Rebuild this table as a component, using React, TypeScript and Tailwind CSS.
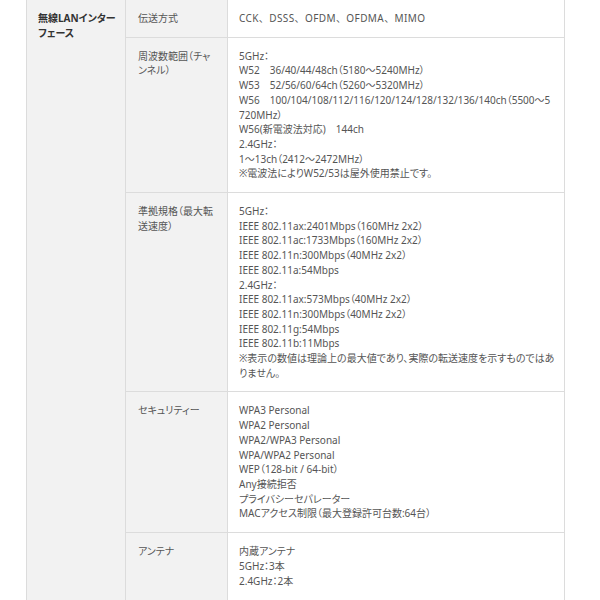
type Row = { label: string[]; lines: string[]; wide?: boolean };

const rows: Row[] = [
	{ label: ["伝送方式"], lines: ["CCK、DSSS、OFDM、OFDMA、MIMO"], wide: true },
	{
		label: ["周波数範囲（チャ", "ンネル）"],
		lines: [
			"5GHz：",
			"W52　36/40/44/48ch（5180～5240MHz）",
			"W53　52/56/60/64ch（5260～5320MHz）",
			"W56　100/104/108/112/116/120/124/128/132/136/140ch（5500～5",
			"720MHz）",
			"W56(新電波法対応)　144ch",
			"2.4GHz：",
			"1～13ch（2412～2472MHz）",
			"※電波法によりW52/53は屋外使用禁止です。",
		],
	},
	{
		label: ["準拠規格（最大転", "送速度）"],
		lines: [
			"5GHz：",
			"IEEE 802.11ax:2401Mbps（160MHz 2x2）",
			"IEEE 802.11ac:1733Mbps（160MHz 2x2）",
			"IEEE 802.11n:300Mbps（40MHz 2x2）",
			"IEEE 802.11a:54Mbps",
			"2.4GHz：",
			"IEEE 802.11ax:573Mbps（40MHz 2x2）",
			"IEEE 802.11n:300Mbps（40MHz 2x2）",
			"IEEE 802.11g:54Mbps",
			"IEEE 802.11b:11Mbps",
			"※表示の数値は理論上の最大値であり、実際の転送速度を示すものではあ",
			"りません。",
		],
	},
	{
		label: ["セキュリティー"],
		lines: [
			"WPA3 Personal",
			"WPA2 Personal",
			"WPA2/WPA3 Personal",
			"WPA/WPA2 Personal",
			"WEP（128-bit / 64-bit）",
			"Any接続拒否",
			"プライバシーセパレーター",
			"MACアクセス制限（最大登録許可台数:64台）",
		],
	},
	{ label: ["アンテナ"], lines: ["内蔵アンテナ", "5GHz：3本", "2.4GHz：2本"] },
];

export default function App() {
	return (
		<div className="min-h-[600px] bg-white font-['Noto_Sans','Noto_Sans_CJK_JP',sans-serif] text-[10px] leading-[14.7px] [font-feature-settings:'palt']">
			<div className="ml-[26px] flex w-[539px] border-x border-[#dcdcdc]">
				<div className="w-[99px] shrink-0 border-r border-[#dcdcdc] bg-[#f2f2f2] py-[11px] pl-[11px] font-bold text-[#333]">
					<p>無線LANインター</p>
					<p>フェース</p>
				</div>
				<div className="min-w-0 flex-1">
					{rows.map((row, i) => (
						<div
							key={i}
							className={`flex ${i < rows.length - 1 ? "border-b border-[#dcdcdc]" : "min-h-[70px]"}`}
						>
							<div className="w-[102px] shrink-0 border-r border-[#dcdcdc] bg-[#f2f2f2] pt-[11px] pb-[11px] pl-[12px] text-[#555]">
								{row.label.map((l) => (
									<p key={l}>{l}</p>
								))}
							</div>
							<div
								className={`min-w-0 flex-1 pt-[11px] pb-[11px] pl-[11px] text-[#555] ${row.wide ? "tracking-[0.4px] [font-feature-settings:normal]" : ""}`}
							>
								{row.lines.map((l, j) => (
									<p key={j} className="whitespace-nowrap">
										{l}
									</p>
								))}
							</div>
						</div>
					))}
				</div>
			</div>
		</div>
	);
}
